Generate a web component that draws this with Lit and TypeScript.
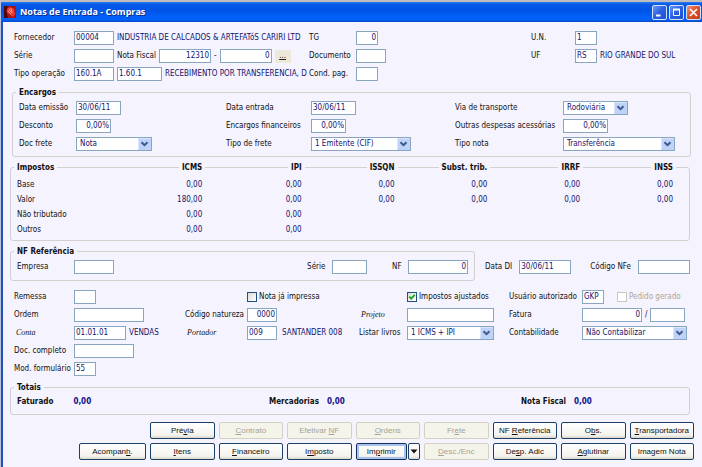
import { LitElement, html, css, svg, nothing } from "lit";
import { customElement } from "lit/decorators.js";
import { classMap } from "lit/directives/class-map.js";

interface FieldOptions {
  value?: string;
  size?: string;
  right?: boolean;
  label?: string;
}

interface Action {
  before: string;
  key: string;
  after: string;
  disabled?: boolean;
}

const TAX_HEADS = ["ICMS", "IPI", "ISSQN", "Subst. trib.", "IRRF", "INSS"];
const TAX_ROWS: [string, string[]][] = [
  ["Base", ["0,00", "0,00", "0,00", "0,00", "0,00", "0,00"]],
  ["Valor", ["180,00", "0,00", "0,00", "0,00", "0,00", "0,00"]],
  ["Não tributado", ["0,00", "0,00", "", "", "", ""]],
  ["Outros", ["0,00", "0,00", "", "", "", ""]],
];

const TOP_ACTIONS: Action[] = [
  { before: "Pré", key: "v", after: "ia" },
  { before: "", key: "C", after: "ontrato", disabled: true },
  { before: "Efetivar ", key: "N", after: "F", disabled: true },
  { before: "", key: "O", after: "rdens", disabled: true },
  { before: "Fr", key: "e", after: "te", disabled: true },
  { before: "NF ", key: "R", after: "eferência" },
  { before: "O", key: "b", after: "s." },
  { before: "", key: "T", after: "ransportadora" },
];
const LEFT_ACTIONS: Action[] = [
  { before: "Acompan", key: "h", after: "." },
  { before: "", key: "I", after: "tens" },
  { before: "", key: "F", after: "inanceiro" },
  { before: "I", key: "m", after: "posto" },
];
const RIGHT_ACTIONS: Action[] = [
  { before: "", key: "D", after: "esc./Enc", disabled: true },
  { before: "De", key: "s", after: "p. Adic" },
  { before: "", key: "A", after: "glutinar" },
  { before: "Imagem Nota", key: "", after: "" },
];

@customElement("app-root")
export class AppRoot extends LitElement {
  static styles = css`
    :host {
      display: flex;
      flex-direction: column;
      min-height: 100vh;
      box-sizing: border-box;
      border-top: 2px solid #bdbdbd;
      border-left: 1px solid #b9c4e0;
      background: #f5f3fd;
      color: #111;
      font: 8px/14px "DejaVu Sans Condensed", "DejaVu Sans", sans-serif;
    }
    * { box-sizing: border-box; }
    h1, h2, p { margin: 0; font: inherit; }
    input, select, button { font: inherit; color: #14146e; margin: 0; }

    .titlebar {
      display: flex;
      align-items: center;
      gap: 4px;
      height: 20px;
      padding: 0 1px 0 3px;
      background: linear-gradient(#2f7df2 0, #0a5be8 2px, #0053e4 8px, #0061fb 15px, #0060f8 18px, #0a45bb 20px);
    }
    .titlebar h1 {
      flex: 1;
      color: #fff;
      font: bold 9px/20px "Open Sans", sans-serif;
      text-shadow: 1px 1px #0a2f8c;
    }
    .logo { width: 12px; height: 12px; }
    .controls { display: flex; gap: 2px; }
    .control {
      width: 15px;
      height: 15px;
      padding: 0;
      border: 1px solid #d6e2fb;
      border-radius: 2px;
      background: linear-gradient(135deg, #6a97f5, #2a5fe0 50%, #1c4fcd);
    }
    .control.close { background: linear-gradient(135deg, #f0957a, #dd4e28 50%, #c43c17); }
    .control svg { display: block; width: 13px; height: 13px; }

    .body {
      flex: 1;
      border-left: 2px solid #2350b4;
      padding: 9px 8px 8px 7px;
    }

    .form { display: grid; align-items: center; row-gap: 4px; grid-auto-rows: 14px; }
    .header { grid-template-columns: 60px 235fr 47px 175fr 44px 119px; padding-left: 4px; }
    .charges { grid-template-columns: 57px 150fr 85px 144fr 108px 128px; padding: 2px 0 6px; }
    .reference { grid-template-columns: 57px 1fr 25px 60px 16px 60px; padding: 2px 0 7px; }
    .details {
      grid-template-columns: 60px 111fr 62px 112fr 48px 102fr 73px 112px;
      margin-top: 9px;
      padding-left: 4px;
    }
    .cell { display: flex; align-items: center; gap: 3px; min-width: 0; white-space: nowrap; }
    .cell.wide { gap: 5px; }
    .spaced { margin-right: 10px; }
    label { white-space: nowrap; }
    .value { color: #14146e; }
    .script { font: italic 8px/14px "Liberation Serif", serif; padding-left: 2px; }

    .field {
      height: 14px;
      padding: 0 1px;
      border: 1px solid #8aa5bf;
      border-radius: 0;
      background: #fff;
      outline: none;
    }
    .right { text-align: right; }
    .w22 { width: 22px; }
    .w30 { width: 30px; }
    .w35 { width: 35px; }
    .w40 { width: 40px; }
    .w45 { width: 45px; }
    .w52 { width: 52px; }
    .w60 { width: 60px; }
    .w65 { width: 65px; }
    .w70 { width: 70px; }
    .w76 { width: 76px; }
    .w87 { width: 87px; }
    .w100 { width: 100px; }
    .w105 { width: 105px; }
    .w112 { width: 112px; }

    .pick { display: inline-grid; grid-template-columns: 1fr 13px; border: 1px solid #8aa5bf; background: #fff; height: 14px; }
    .pick select {
      grid-area: 1 / 1 / 2 / 3;
      appearance: none;
      width: 100%;
      height: 12px;
      line-height: 12px;
      padding: 0 14px 0 3px;
      border: 0;
      background: none;
      outline: none;
    }
    .pick svg { grid-area: 1 / 2; width: 13px; height: 12px; pointer-events: none; }

    .more {
      width: 16px;
      height: 13px;
      padding: 0;
      border: 0;
      background: #ece9d8;
      color: #222;
      line-height: 10px;
      text-decoration: underline;
    }

    .check { display: flex; align-items: center; gap: 2px; }
    .check input {
      appearance: none;
      width: 10px;
      height: 10px;
      border: 1px solid #1c5180;
      background: linear-gradient(135deg, #dcdcd7, #fff);
    }
    .check .box { display: grid; }
    .check .box > * { grid-area: 1 / 1; }
    .check svg { width: 10px; height: 10px; pointer-events: none; }
    .check.off { color: #aaa79b; }
    .check.off input { border-color: #cac8bb; background: #fff; }

    .group { position: relative; isolation: isolate; padding-left: 7px; margin-right: 4px; }
    .group::before {
      content: "";
      position: absolute;
      inset: 5px 0 0 0;
      border: 1px solid #d3d0cf;
      border-radius: 3px;
      z-index: -1;
    }
    .group h2, .taxes th {
      font-weight: bold;
      font-size: 8px;
      line-height: 12px;
    }
    .group h2 span, .taxes th span { background: #f5f3fd; padding: 0 3px; margin-left: -3px; }
    .inset { margin: 6px 3px 0 2px; }
    .tax-group { margin-top: 5px; padding-right: 17px; padding-bottom: 4px; padding-left: 0; }

    .taxes { width: 100%; table-layout: fixed; border-collapse: collapse; }
    .taxes th, .taxes td { padding: 0; text-align: right; white-space: nowrap; }
    .taxes tbody td, .taxes tbody th { height: 15px; line-height: 15px; color: #14146e; }
    .taxes thead th { height: 15px; vertical-align: top; }
    .taxes thead th span { margin-right: -3px; }
    .taxes th:first-child { text-align: left; padding-left: 7px; width: 15%; }
    .taxes tbody th { font-weight: normal; color: #111; }
    .taxes th:nth-child(2) { width: 14%; }
    .taxes th:nth-child(3) { width: 15%; }

    .refrow { display: flex; align-items: flex-end; margin-top: 5px; }
    .refrow .group { flex: 1; margin-right: 10px; padding-right: 7px; }
    .refside { display: flex; gap: 7px; padding-bottom: 7px; margin-right: 4px; }
    .refside .second { margin-left: 12px; }

    .totals { margin-top: 6px; }
    .sums {
      display: grid;
      grid-template-columns: 252fr 252fr 169fr;
      font-weight: bold;
      line-height: 12px;
      padding: 2px 0 7px;
    }
    .sums .sum { display: flex; gap: 8px; }
    .sums .first { gap: 20px; }
    .sums output { color: #10108c; }

    .actions {
      display: grid;
      grid-template-columns: 67px repeat(8, minmax(0, 1fr));
      gap: 4px;
      margin: 7px 0 0 69px;
    }
    .actions .start { grid-column: 2; }
    .action {
      width: 100%;
      height: 17px;
      padding: 0;
      border: 1px solid #1b4067;
      border-radius: 2px;
      background: linear-gradient(#fff, #f4f3ee 80%, #dcd6cb);
      color: #111;
      font: 8px/14px "Liberation Sans", Arial, sans-serif;
      white-space: nowrap;
    }
    .action:disabled { border-color: #d3d1c2; background: #f5f4ea; color: #a5a296; }
    .split { display: grid; grid-template-columns: 1fr 12px; gap: 1px; }
    .split .main { box-shadow: inset 0 0 0 2px #a9c3ee; border-color: #12305c; }
    .split svg { display: block; width: 8px; height: 5px; margin: auto; }
  `;

  private field(id: string, o: FieldOptions = {}) {
    return html`<input type="text" id=${id} aria-label=${o.label ?? nothing}
      class=${classMap({ field: true, right: !!o.right, [o.size ?? "w40"]: true })} .value=${o.value ?? ""} />`;
  }

  private label(id: string, text: string, script = false) {
    return html`<label for=${id} class=${classMap({ script })}>${text}</label>`;
  }

  private pick(id: string, value: string, size: string) {
    return html`<span class="pick ${size}">
      <select id=${id}><option selected>${value}</option></select>
      <svg viewBox="0 0 13 12" aria-hidden="true">
        <rect width="13" height="12" fill="#bfd2f8" />
        <path d="M0.5 11.5V0.5H12.5" fill="none" stroke="#dbe6fc" />
        <path d="M3.5 4.2L6.5 7.2L9.5 4.2" fill="none" stroke="#3d5a8c" stroke-width="2" />
      </svg>
    </span>`;
  }

  private check(id: string, text: string, checked = false, disabled = false) {
    return html`<span class=${classMap({ check: true, off: disabled })}>
      <span class="box">
        <input type="checkbox" id=${id} .checked=${checked} ?disabled=${disabled} />
        ${checked
          ? html`<svg viewBox="0 0 10 10" aria-hidden="true">${svg`<path d="M2.3 4.6L4.2 6.6L7.8 2.8" fill="none" stroke="#21a121" stroke-width="1.8" />`}</svg>`
          : nothing}
      </span>
      <label for=${id}>${text}</label>
    </span>`;
  }

  private action(a: Action, cls = "") {
    return html`<button type="button" class="action ${cls}" ?disabled=${a.disabled}>${a.before}${a.key ? html`<u>${a.key}</u>` : nothing}${a.after}</button>`;
  }

  render() {
    return html`
      <header class="titlebar">
        <svg class="logo" viewBox="0 0 12 12" aria-hidden="true">
          <rect width="12" height="12" fill="#a81218" />
          <path d="M0 0H4L2 5L4 12H0Z" fill="#4f0709" />
          <path d="M3 3L6 1L10 3L11 8L9 11L6 9L3 6Z" fill="#ee3b30" />
          <path d="M5 3L7 6M7 2L8 7M4 5L7 8" stroke="#ffb0a4" stroke-width="0.8" />
        </svg>
        <h1>Notas de Entrada - Compras</h1>
        <div class="controls">
          <button class="control" type="button" aria-label="Minimizar">
            <svg viewBox="0 0 13 13"><path d="M3 9.5H7.5" stroke="#fff" stroke-width="2" /></svg>
          </button>
          <button class="control" type="button" aria-label="Maximizar">
            <svg viewBox="0 0 13 13"><path d="M3.5 3V9.5H9.5V3" fill="none" stroke="#fff" /><path d="M3 3.5H10" stroke="#fff" stroke-width="2" /></svg>
          </button>
          <button class="control close" type="button" aria-label="Fechar">
            <svg viewBox="0 0 13 13"><path d="M3 3L10 10M10 3L3 10" stroke="#fff" stroke-width="1.6" /></svg>
          </button>
        </div>
      </header>

      <main class="body">
        <section class="form header">
          ${this.label("fornecedor", "Fornecedor")}
          <div class="cell">${this.field("fornecedor", { value: "00004" })}<span class="value">INDUSTRIA DE CALCADOS &amp; ARTEFATóS CARIRI LTD</span></div>
          ${this.label("tg", "TG")}
          <div class="cell">${this.field("tg", { value: "0", size: "w22", right: true })}</div>
          ${this.label("un", "U.N.")}
          <div class="cell">${this.field("un", { value: "1", size: "w22" })}</div>

          ${this.label("serie", "Série")}
          <div class="cell">
            ${this.field("serie")}
            ${this.label("nota", "Nota Fiscal")}
            ${this.field("nota", { value: "12310", size: "w52", right: true })}
            <span>-</span>
            ${this.field("sub", { value: "0", size: "w52", right: true, label: "Complemento da nota" })}
            <button class="more" type="button" aria-label="Procurar">...</button>
          </div>
          ${this.label("documento", "Documento")}
          <div class="cell">${this.field("documento", { size: "w30" })}</div>
          ${this.label("uf", "UF")}
          <div class="cell">${this.field("uf", { value: "RS", size: "w22" })}<span class="value">RIO GRANDE DO SUL</span></div>

          ${this.label("tipo", "Tipo operação")}
          <div class="cell">
            ${this.field("tipo", { value: "160.1A" })}
            ${this.field("cfop", { value: "1.60.1", size: "w45", label: "Código fiscal" })}
            <span class="value">RECEBIMENTO POR TRANSFERENCIA, D</span>
          </div>
          ${this.label("cond", "Cond. pag.")}
          <div class="cell">${this.field("cond", { size: "w22" })}</div>
        </section>

        <section class="group inset">
          <h2><span>Encargos</span></h2>
          <div class="form charges">
            ${this.label("emissao", "Data emissão")}
            <div class="cell">${this.field("emissao", { value: "30/06/11", size: "w45" })}</div>
            ${this.label("entrada", "Data entrada")}
            <div class="cell">${this.field("entrada", { value: "30/06/11", size: "w45" })}</div>
            ${this.label("via", "Via de transporte")}
            <div class="cell">${this.pick("via", "Rodoviária", "w65")}</div>

            ${this.label("desconto", "Desconto")}
            <div class="cell">${this.field("desconto", { value: "0,00%", size: "w35", right: true })}</div>
            ${this.label("financeiros", "Encargos financeiros")}
            <div class="cell">${this.field("financeiros", { value: "0,00%", size: "w35", right: true })}</div>
            ${this.label("despesas", "Outras despesas acessórias")}
            <div class="cell">${this.field("despesas", { value: "0,00%", size: "w45", right: true })}</div>

            ${this.label("docfrete", "Doc frete")}
            <div class="cell">${this.pick("docfrete", "Nota", "w76")}</div>
            ${this.label("tipofrete", "Tipo de frete")}
            <div class="cell">${this.pick("tipofrete", "1 Emitente (CIF)", "w100")}</div>
            ${this.label("tiponota", "Tipo nota")}
            <div class="cell">${this.pick("tiponota", "Transferência", "w112")}</div>
          </div>
        </section>

        <section class="group tax-group">
          <table class="taxes">
            <thead>
              <tr><th scope="col"><span>Impostos</span></th>${TAX_HEADS.map((h) => html`<th scope="col"><span>${h}</span></th>`)}</tr>
            </thead>
            <tbody>
              ${TAX_ROWS.map(([name, cells]) => html`<tr><th scope="row">${name}</th>${cells.map((c) => html`<td>${c}</td>`)}</tr>`)}
            </tbody>
          </table>
        </section>

        <div class="refrow">
          <section class="group">
            <h2><span>NF Referência</span></h2>
            <div class="form reference">
              ${this.label("empresa", "Empresa")}
              <div class="cell">${this.field("empresa")}</div>
              ${this.label("refserie", "Série")}
              <div class="cell">${this.field("refserie", { size: "w35" })}</div>
              ${this.label("nf", "NF")}
              <div class="cell">${this.field("nf", { value: "0", size: "w60", right: true })}</div>
            </div>
          </section>
          <div class="refside">
            ${this.label("datadi", "Data DI")}${this.field("datadi", { value: "30/06/11", size: "w52" })}
            <label class="second" for="nfe">Código NFe</label>${this.field("nfe", { size: "w52" })}
          </div>
        </div>

        <section class="form details">
          ${this.label("remessa", "Remessa")}
          <div class="cell">${this.field("remessa", { size: "w22" })}</div>
          <span></span>
          ${this.check("impressa", "Nota já impressa")}
          <span></span>
          ${this.check("ajustados", "Impostos ajustados", true)}
          ${this.label("usuario", "Usuário autorizado")}
          <div class="cell"><span class="spaced">${this.field("usuario", { value: "GKP", size: "w22" })}</span>${this.check("pedido", "Pedido gerado", false, true)}</div>

          ${this.label("ordem", "Ordem")}
          <div class="cell">${this.field("ordem", { size: "w70" })}</div>
          ${this.label("natureza", "Código natureza")}
          <div class="cell">${this.field("natureza", { value: "0000", size: "w30", right: true })}</div>
          ${this.label("projeto", "Projeto", true)}
          <div class="cell">${this.field("projeto", { size: "w87" })}</div>
          ${this.label("fatura", "Fatura")}
          <div class="cell">${this.field("fatura", { value: "0", size: "w60", right: true })}<span>/</span>${this.field("parcela", { size: "w35", label: "Parcela" })}</div>

          ${this.label("conta", "Conta", true)}
          <div class="cell">${this.field("conta", { value: "01.01.01", size: "w52" })}<span class="value">VENDAS</span></div>
          ${this.label("portador", "Portador", true)}
          <div class="cell wide">${this.field("portador", { value: "009", size: "w30" })}<span class="value">SANTANDER 008</span></div>
          ${this.label("livros", "Listar livros")}
          <div class="cell">${this.pick("livros", "1 ICMS + IPI", "w87")}</div>
          ${this.label("contabilidade", "Contabilidade")}
          <div class="cell">${this.pick("contabilidade", "Não Contabilizar", "w105")}</div>

          ${this.label("completo", "Doc. completo")}
          <div class="cell">${this.field("completo", { size: "w60" })}</div>
          <span></span><span></span><span></span><span></span><span></span><span></span>
          ${this.label("modelo", "Mod. formulário")}
          <div class="cell">${this.field("modelo", { value: "55", size: "w22" })}</div>
        </section>

        <section class="group totals">
          <h2><span>Totais</span></h2>
          <div class="sums">
            <div class="sum first"><span>Faturado</span><output>0,00</output></div>
            <div class="sum"><span>Mercadorias</span><output>0,00</output></div>
            <div class="sum"><span>Nota Fiscal</span><output>0,00</output></div>
          </div>
        </section>

        <nav class="actions">
          ${TOP_ACTIONS.map((a, i) => this.action(a, i === 0 ? "start" : ""))}
          ${LEFT_ACTIONS.map((a) => this.action(a))}
          <div class="split">
            ${this.action({ before: "Im", key: "p", after: "rimir" }, "main")}
            <button type="button" class="action" aria-label="Opções de impressão">
              <svg viewBox="0 0 8 5"><path d="M0.5 0.5H7.5L4 4.5Z" fill="#111" /></svg>
            </button>
          </div>
          ${RIGHT_ACTIONS.map((a) => this.action(a))}
        </nav>
      </main>
    `;
  }
}
